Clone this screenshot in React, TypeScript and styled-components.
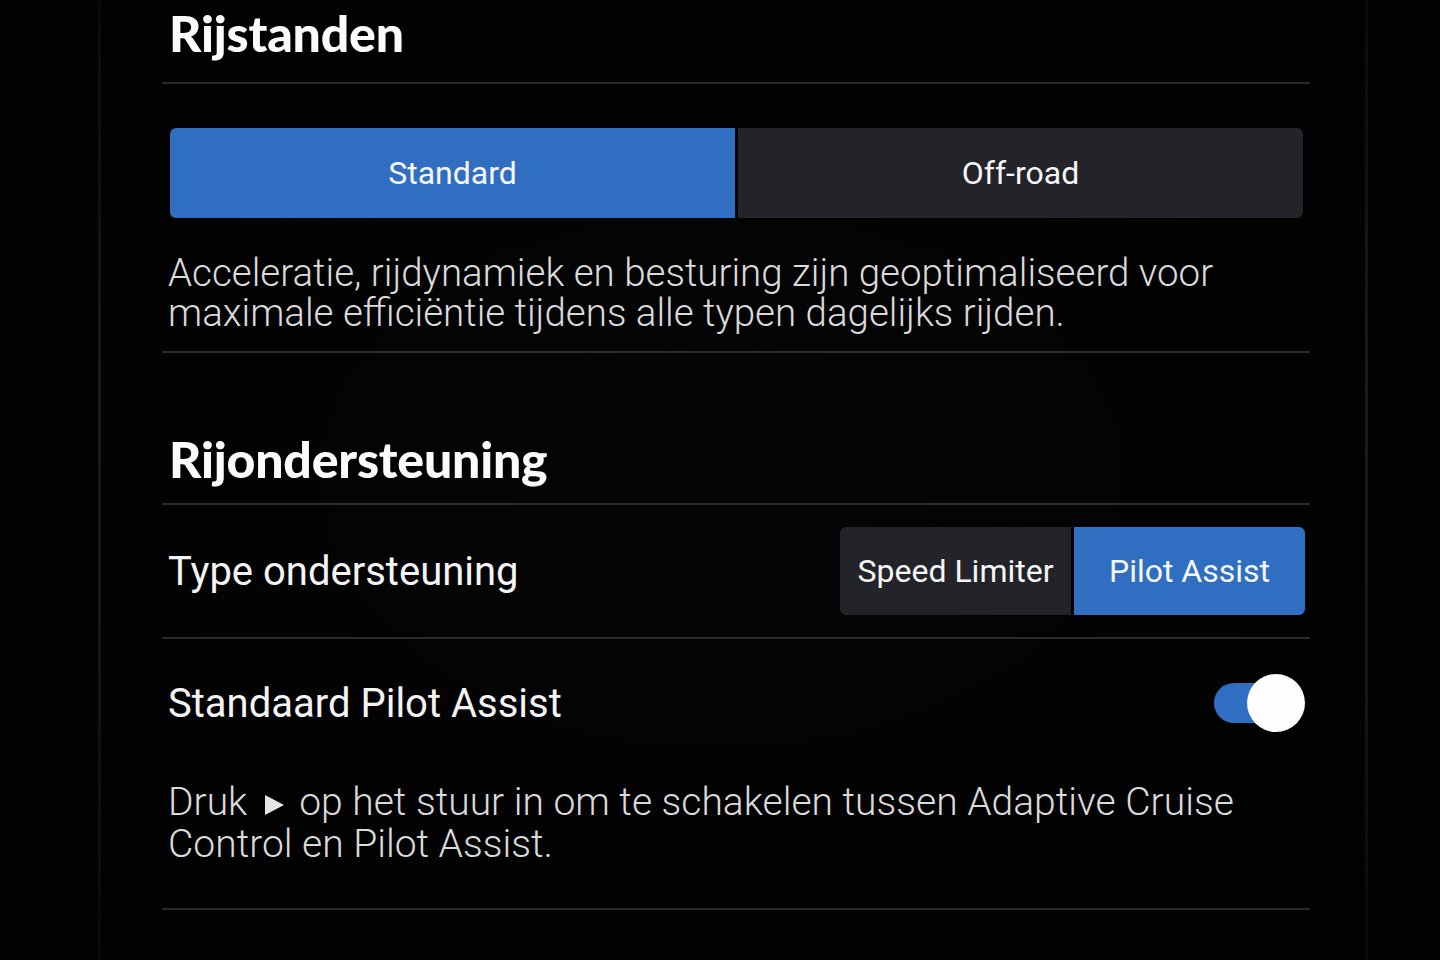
import { FC, useState } from 'react'
import styled, { createGlobalStyle } from 'styled-components'

const GlobalStyle = createGlobalStyle`
  html, body {
    margin: 0;
    padding: 0;
    background: #020203;
  }
  body {
    font-family: Roboto, 'Liberation Sans', sans-serif;
    color: #f4f4f4;
    -webkit-font-smoothing: antialiased;
  }
`

const Frame = styled.div`
  display: flex;
  flex-direction: row;
  width: 1440px;
  height: 960px;
  overflow: hidden;
  background: radial-gradient(ellipse at 50% 50%, #050506 0%, #020203 70%);
`

const Bezel = styled.div<{ $gap: number }>`
  flex: none;
  width: 3px;
  margin-left: ${({ $gap }) => $gap}px;
  background: linear-gradient(180deg, #0a0a0a 0%, #1a1a19 40%, #161614 70%, #080808 100%);
`

const Screen = styled.div`
  flex: none;
  width: 1148px;
  margin-left: 61px;
  display: flex;
  flex-direction: column;
`

const SectionTitle = styled.h2<{ $top: number }>`
  margin: ${({ $top }) => $top}px 0 0;
  padding: 0 7px;
  font-family: Lato, 'Open Sans', sans-serif;
  font-weight: 900;
  font-size: 50px;
  line-height: 60px;
  letter-spacing: -0.2px;
  color: #fbfbfb;
`

const Divider = styled.div<{ $top: number }>`
  height: 2px;
  margin-top: ${({ $top }) => $top}px;
  background: #2a2a30;
`

const Segmented = styled.div<{ $width?: number; $height: number }>`
  display: flex;
  flex-direction: row;
  gap: 3px;
  width: ${({ $width }) => ($width ? `${$width}px` : 'auto')};
  height: ${({ $height }) => $height}px;
  border-radius: 6px;
  overflow: hidden;
  flex: none;
`

const Segment = styled.button<{ $active: boolean }>`
  flex: 1;
  border: none;
  margin: 0;
  padding: 0;
  display: flex;
  align-items: center;
  justify-content: center;
  background: ${({ $active }) => ($active ? '#2f6ec1' : '#23232a')};
  color: #f6f6f6;
  font-family: Roboto, 'Liberation Sans', sans-serif;
  font-size: 32px;
  font-weight: 400;
  cursor: pointer;
`

const TopSegmented = styled.div`
  margin-top: 44px;
  padding: 0 7px 0 8px;
`

const Description = styled.p<{ $top: number; $size: number; $lineHeight: number }>`
  margin: ${({ $top }) => $top}px 0 0;
  padding: 0 6px;
  font-family: Roboto, 'Liberation Sans', sans-serif;
  font-weight: 300;
  font-size: ${({ $size }) => $size}px;
  line-height: ${({ $lineHeight }) => $lineHeight}px;
  color: #dadada;
  max-width: 1110px;
`

const SettingRow = styled.div<{ $height: number; $top?: number }>`
  display: flex;
  flex-direction: row;
  align-items: center;
  justify-content: space-between;
  height: ${({ $height }) => $height}px;
  margin-top: ${({ $top }) => $top ?? 0}px;
  padding: 0 5px 0 6px;
`

const RowLabel = styled.span`
  font-family: Roboto, 'Liberation Sans', sans-serif;
  font-size: 40px;
  font-weight: 400;
  color: #f4f4f4;
`

const Toggle = styled.button`
  position: relative;
  width: 91px;
  height: 58px;
  border: none;
  padding: 0;
  background: transparent;
  cursor: pointer;
  flex: none;
`

const Track = styled.span<{ $on: boolean }>`
  position: absolute;
  left: 0;
  top: 9px;
  width: 76px;
  height: 40px;
  border-radius: 20px;
  background: ${({ $on }) => ($on ? '#2f6ec1' : '#3a3a40')};
`

const Knob = styled.span<{ $on: boolean }>`
  position: absolute;
  top: 0;
  left: ${({ $on }) => ($on ? 33 : 0)}px;
  width: 58px;
  height: 58px;
  border-radius: 50%;
  background: #fdfdfd;
  transition: left 0.2s ease-in-out;
`

const PlayIcon = styled.svg`
  display: inline-block;
  width: 22px;
  height: 22px;
  margin: 0 14px 0 16px;
  vertical-align: -1px;
`

const App: FC = () => {
  const [mode, setMode] = useState<'standard' | 'offroad'>('standard')
  const [assist, setAssist] = useState<'limiter' | 'pilot'>('pilot')
  const [pilotDefault, setPilotDefault] = useState(true)

  return (
    <>
      <GlobalStyle />
      <Frame>
        <Bezel $gap={98} />
        <Screen>
          <SectionTitle $top={3}>Rijstanden</SectionTitle>
          <Divider $top={19} />
          <TopSegmented>
            <Segmented $height={90}>
              <Segment $active={mode === 'standard'} onClick={() => setMode('standard')}>
                Standard
              </Segment>
              <Segment $active={mode === 'offroad'} onClick={() => setMode('offroad')}>
                Off-road
              </Segment>
            </Segmented>
          </TopSegmented>
          <Description $top={35} $size={38.5} $lineHeight={40}>
            Acceleratie, rijdynamiek en besturing zijn geoptimaliseerd voor maximale efficiëntie tijdens alle
            typen dagelijks rijden.
          </Description>
          <Divider $top={18} />

          <SectionTitle $top={76}>Rijondersteuning</SectionTitle>
          <Divider $top={14} />
          <SettingRow $height={132}>
            <RowLabel>Type ondersteuning</RowLabel>
            <Segmented $width={465} $height={88}>
              <Segment $active={assist === 'limiter'} onClick={() => setAssist('limiter')}>
                Speed Limiter
              </Segment>
              <Segment $active={assist === 'pilot'} onClick={() => setAssist('pilot')}>
                Pilot Assist
              </Segment>
            </Segmented>
          </SettingRow>
          <Divider $top={0} />
          <SettingRow $height={80} $top={24}>
            <RowLabel>Standaard Pilot Assist</RowLabel>
            <Toggle onClick={() => setPilotDefault(!pilotDefault)}>
              <Track $on={pilotDefault} />
              <Knob $on={pilotDefault} />
            </Toggle>
          </SettingRow>
          <Description $top={38} $size={39} $lineHeight={42}>
            Druk
            <PlayIcon viewBox="0 0 22 22" aria-label="play">
              <path d="M2 1 L21 11 L2 21 Z" fill="#e6e6e6" />
            </PlayIcon>
            op het stuur in om te schakelen tussen Adaptive Cruise Control en Pilot Assist.
          </Description>
          <Divider $top={43} />
        </Screen>
        <Bezel $gap={55} />
      </Frame>
    </>
  )
}

export default App
